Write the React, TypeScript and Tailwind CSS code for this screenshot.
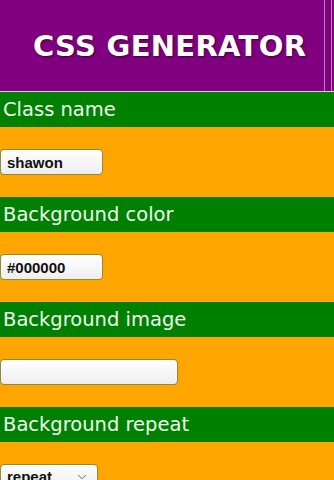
import { ChevronDown } from 'lucide-react'

const sections = [
  { label: 'Class name', kind: 'text', value: 'shawon', width: 'w-[103px]' },
  { label: 'Background color', kind: 'text', value: '#000000', width: 'w-[103px]' },
  { label: 'Background image', kind: 'text', value: '', width: 'w-[178px]' },
  { label: 'Background repeat', kind: 'select', value: 'repeat', width: 'w-[98px]' },
]

export default function App() {
  return (
    <div className="w-[334px] h-[480px] overflow-hidden bg-[#ffa500] font-['DejaVu_Sans',sans-serif]">
      {/* Header */}
      <header className="flex h-[92px] bg-[#800080] border-b border-[#d9c9d9]">
        <div className="flex-1 flex items-center pl-[33px] pt-[2px]">
          <h1 className="text-[29px] leading-none font-bold tracking-[0.3px] text-white [text-shadow:1px_1px_2px_#3a003a]">
            CSS GENERATOR
          </h1>
        </div>
        <div className="w-[10px] flex justify-between pr-[2px]">
          <div className="w-[1px] bg-[#b18ab1]" />
          <div className="w-[1px] bg-[#b18ab1]" />
        </div>
      </header>

      {sections.map(s => (
        <section key={s.label}>
          <div className="h-[35px] bg-[#008000] flex items-center px-[3px] text-[19.5px] text-[#effcef]">
            {s.label}
          </div>
          <div className="h-[70px] flex items-center">
            {s.kind === 'text' ? (
              <input
                readOnly
                value={s.value}
                className={`${s.width} h-[26px] rounded-[4px] border border-[#8c8c3c] bg-gradient-to-b from-white to-[#eeeeee] px-[6px] font-['Liberation_Sans',sans-serif] font-bold text-[15px] text-[#111] outline-none`}
              />
            ) : (
              <div
                className={`${s.width} h-[26px] rounded-[4px] border border-[#8c8c3c] bg-gradient-to-b from-white to-[#eeeeee] pl-[6px] pr-[8px] flex items-center justify-between font-['Liberation_Sans',sans-serif] font-bold text-[15px] text-[#111]`}
              >
                <span>{s.value}</span>
                <ChevronDown size={14} strokeWidth={1.5} className="text-[#555]" />
              </div>
            )}
          </div>
        </section>
      ))}
    </div>
  )
}
